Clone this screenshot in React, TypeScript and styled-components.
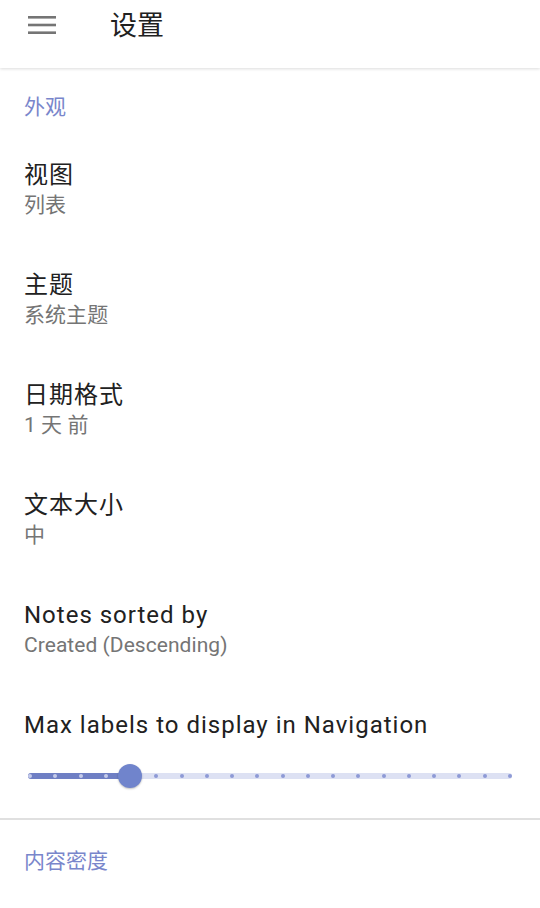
import styled, { createGlobalStyle } from "styled-components";

const GlobalStyle = createGlobalStyle`
	html, body {
		margin: 0;
		padding: 0;
		background: #ffffff;
	}
	body {
		font-family: Roboto, "Noto Sans CJK SC", sans-serif;
		color: #212121;
	}
`;

const Page = styled.div`
	width: 540px;
	min-height: 908px;
	background: #ffffff;
	overflow: hidden;
`;

const Header = styled.header`
	height: 68px;
	display: flex;
	align-items: flex-start;
	padding: 15px 28px 0;
	box-sizing: border-box;
	box-shadow: 0 1px 3px rgba(0, 0, 0, 0.14);
	position: relative;
`;

const MenuButton = styled.div`
	width: 28px;
	height: 20px;
	display: flex;
	color: #757575;
`;

const HeaderTitle = styled.h1`
	margin: -3px 0 0 54px;
	font-size: 27px;
	font-weight: 400;
	color: #212121;
	line-height: 28px;
`;

const SectionHeader = styled.div<{ $top: number }>`
	padding: ${(p) => p.$top}px 24px 14px;
	font-size: 21px;
	line-height: 26px;
	color: #7986cb;
`;

const Item = styled.div`
	padding: 26px 24px 24px;
	display: flex;
	flex-direction: column;
`;

const ItemTitle = styled.div`
	font-size: 24px;
	line-height: 30px;
	color: #212121;
	letter-spacing: 1px;
`;

const ItemSub = styled.div`
	font-size: 21px;
	line-height: 30px;
	color: #757575;
	letter-spacing: 0.05px;
`;

const SliderItem = styled.div`
	padding: 26px 24px 18px;
	display: flex;
	flex-direction: column;
`;

const SliderBox = styled.div`
	margin-top: 12px;
	height: 48px;
	display: flex;
	align-items: center;
	padding: 0 4px;
`;

const Track = styled.div`
	flex: 1;
	height: 6px;
	border-radius: 3px;
	background: #dde1f3;
	position: relative;
	display: flex;
	justify-content: space-between;
	align-items: center;
`;

const ActiveTrack = styled.div`
	position: absolute;
	left: 0;
	top: 0;
	bottom: 0;
	border-radius: 3px;
	background: #6f7fc4;
`;

const Tick = styled.span<{ $active: boolean }>`
	width: 4px;
	height: 4px;
	border-radius: 50%;
	background: ${(p) => (p.$active ? "#c5cbea" : "#8e9ad6")};
	position: relative;
	z-index: 1;
`;

const Thumb = styled.div`
	position: absolute;
	top: 50%;
	width: 24px;
	height: 24px;
	margin: -12px 0 0 -12px;
	border-radius: 50%;
	background: #7084cc;
	box-shadow: 0 1px 2px rgba(0, 0, 0, 0.25);
	z-index: 2;
`;

const Divider = styled.hr`
	margin: 0;
	border: none;
	height: 2px;
	background: #e0e0e0;
`;

const items = [
	{ title: "视图", sub: "列表" },
	{ title: "主题", sub: "系统主题" },
	{ title: "日期格式", sub: "1 天 前" },
	{ title: "文本大小", sub: "中" },
	{ title: "Notes sorted by", sub: "Created (Descending)" },
];

const steps = 20;
const value = 4;

export default function App() {
	const pct = (value / (steps - 1)) * 100;
	return (
		<Page>
			<GlobalStyle />
			<Header>
				<MenuButton>
					<svg width="28" height="20" viewBox="0 0 28 20">
						<rect x="0" y="1" width="28" height="2.6" fill="currentColor" />
						<rect x="0" y="8.7" width="28" height="2.6" fill="currentColor" />
						<rect x="0" y="16.4" width="28" height="2.6" fill="currentColor" />
					</svg>
				</MenuButton>
				<HeaderTitle>设置</HeaderTitle>
			</Header>
			<SectionHeader $top={26}>外观</SectionHeader>
			{items.map((it) => (
				<Item key={it.title}>
					<ItemTitle>{it.title}</ItemTitle>
					<ItemSub>{it.sub}</ItemSub>
				</Item>
			))}
			<SliderItem>
				<ItemTitle>Max labels to display in Navigation</ItemTitle>
				<SliderBox>
					<Track>
						<ActiveTrack style={{ width: `${pct}%` }} />
						{Array.from({ length: steps }, (_, i) => (
							<Tick key={i} $active={i <= value} />
						))}
						<Thumb style={{ left: `${pct}%` }} />
					</Track>
				</SliderBox>
			</SliderItem>
			<Divider />
			<SectionHeader $top={28}>内容密度</SectionHeader>
		</Page>
	);
}
